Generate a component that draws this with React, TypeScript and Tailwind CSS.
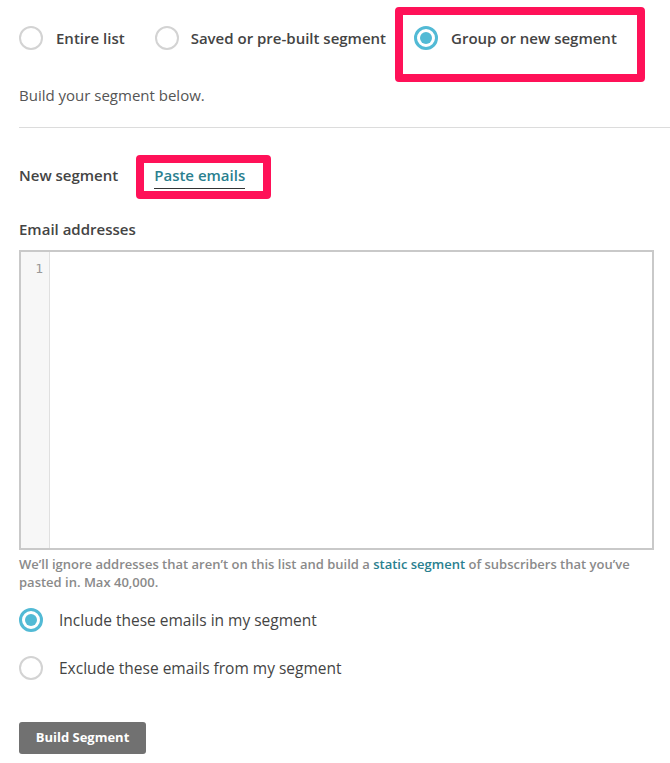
import React from 'react'

function Radio({ checked }: { checked?: boolean }) {
  if (checked) {
    return (
      <span className="flex h-6 w-6 shrink-0 items-center justify-center rounded-full border-[3px] border-[#52bad5] bg-white">
        <span className="h-3 w-3 rounded-full bg-[#52bad5]" />
      </span>
    )
  }
  return <span className="h-6 w-6 shrink-0 rounded-full border-2 border-[#d3d3d3] bg-white" />
}

export default function App() {
  return (
    <div
      className="min-h-[763px] w-[670px] bg-white pl-[19px] text-[15px] text-[#444]"
      style={{ fontFamily: '"Open Sans", "Liberation Sans", sans-serif' }}
    >
      {/* segment type */}
      <div className="flex items-start pt-[7px]">
        <label className="mt-[19px] flex items-center gap-[13px] font-semibold leading-6">
          <Radio />
          Entire list
        </label>
        <label className="ml-[30px] mt-[19px] flex items-center gap-[12px] font-semibold leading-6">
          <Radio />
          Saved or pre-built segment
        </label>
        <div className="ml-[9px] h-[75px] w-[250px] rounded-[4px] border-[8px] border-[#ff1158] pl-[11px] pt-[11px]">
          <label className="flex items-center gap-[13px] font-semibold leading-6">
            <Radio checked />
            Group or new segment
          </label>
        </div>
      </div>

      <p className="mt-[3px] leading-5 text-[#555]">Build your segment below.</p>

      <div className="mt-[22px] h-px bg-[#dcdcdc]" />

      <div className="mt-[27px] flex items-start">
        <span className="mt-[10px] font-semibold leading-5">New segment</span>
        <div className="ml-[18px] h-[44px] rounded-[4px] border-[8px] border-[#ff1158] pl-[10px] pr-[18px] pt-[2px]">
          <span className="block border-b border-[#333] pb-[3px] font-semibold leading-5 text-[#2a7f8f]">
            Paste emails
          </span>
        </div>
      </div>

      <div className="mt-[20px] font-semibold leading-5">Email addresses</div>

      <div className="mt-[11px] flex h-[300px] w-[635px] border-2 border-[#c9c9c9]">
        <div className="w-[29px] shrink-0 border-r border-[#e0e0e0] bg-[#f7f7f7] pr-[6px] pt-[7px] text-right text-[13px] leading-5 text-[#999]" style={{ fontFamily: '"DejaVu Sans Mono", monospace' }}>
          1
        </div>
        <div className="flex-1" />
      </div>

      <p className="mt-[5px] w-[635px] text-[13px] font-semibold leading-[18px] text-[#8a8a8a]">
        We’ll ignore addresses that aren’t on this list and build a{' '}
        <span className="text-[#2a7f8f]">static segment</span> of subscribers that you’ve pasted in. Max 40,000.
      </p>

      <label className="mt-[17px] flex items-center gap-[16px] text-[15.5px] leading-6">
        <Radio checked />
        Include these emails in my segment
      </label>
      <label className="mt-[24px] flex items-center gap-[16px] text-[15.5px] leading-6">
        <Radio />
        Exclude these emails from my segment
      </label>

      <button className="mt-[42px] h-[32px] w-[127px] rounded-[3px] bg-[#717171] text-[13px] font-bold text-white">
        Build Segment
      </button>
    </div>
  )
}
